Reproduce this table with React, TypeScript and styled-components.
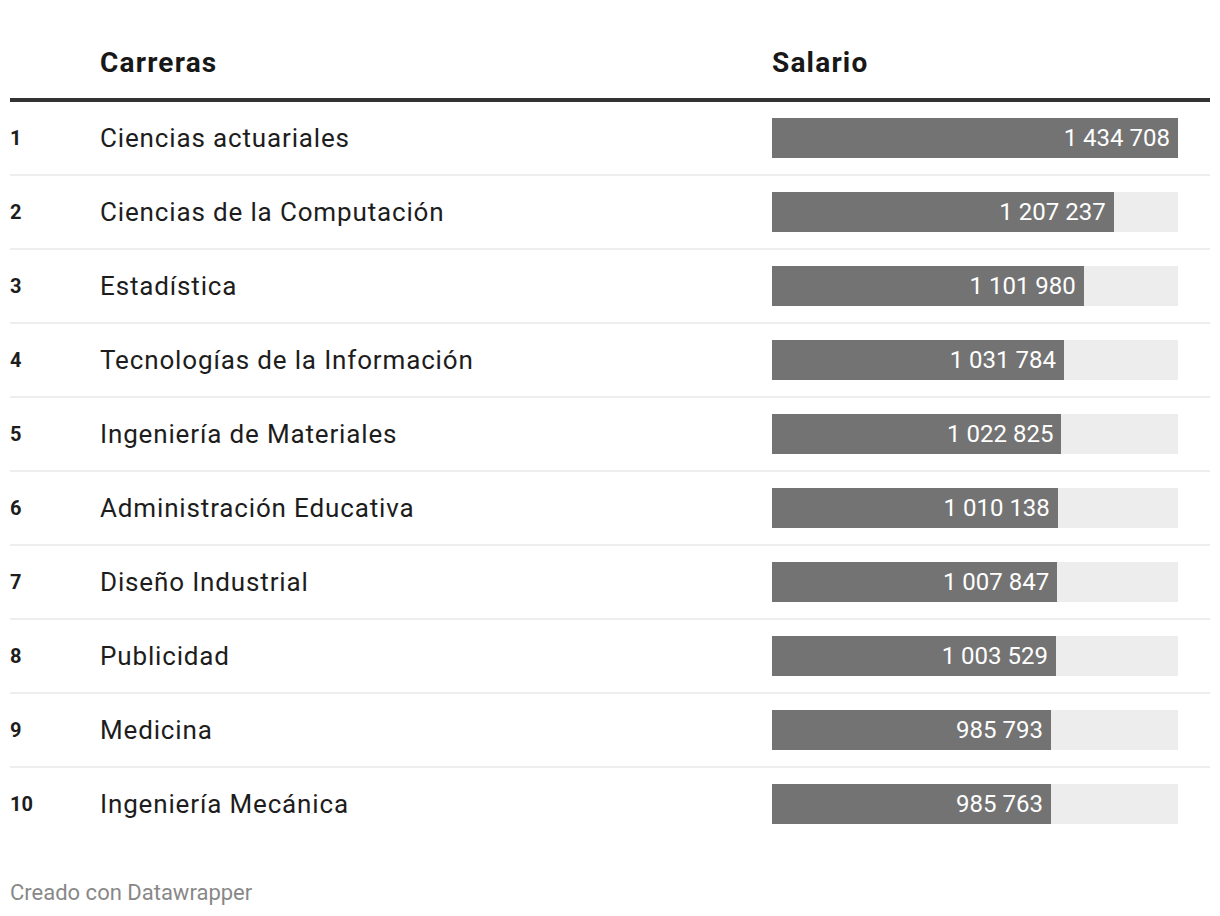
import styled, { createGlobalStyle } from 'styled-components';

const GlobalStyle = createGlobalStyle`
  body {
    margin: 0;
    background: #ffffff;
    font-family: Roboto, "Liberation Sans", sans-serif;
    color: #1d1d1d;
  }
`

const Page = styled.div`
  width: 1200px;
  padding: 0 10px;
`

const Table = styled.div`
  display: flex;
  flex-direction: column;
`

const Row = styled.div<{ $head?: boolean }>`
  display: grid;
  grid-template-columns: 90px 1fr 438px;
  align-items: center;
  padding: ${p => (p.$head ? '47px 0 19px' : '16px 0')};
  border-bottom: ${p => (p.$head ? '4px solid #333333' : '2px solid #eeeeee')};

  &:last-child {
    border-bottom: none;
  }
`

const HeadCell = styled.div`
  font-size: 28px;
  font-weight: 700;
  line-height: 32px;
  letter-spacing: 1.2px;
  color: #181818;
`

const Rank = styled.div`
  font-size: 20px;
  font-weight: 700;
  color: #1d1d1d;
`

const Name = styled.div`
  font-size: 26px;
  line-height: 40px;
  letter-spacing: 0.85px;
  color: #1d1d1d;
`

const Track = styled.div`
  width: 406px;
  height: 40px;
  background: #ededed;
  display: flex;
`

const Bar = styled.div`
  height: 100%;
  background: #737373;
  color: #ffffff;
  font-size: 24px;
  line-height: 40px;
  text-align: right;
  padding-right: 8px;
  box-sizing: border-box;
  white-space: nowrap;
`

const Footer = styled.div`
  margin-top: 40px;
  font-size: 22px;
  color: #888888;
`

const rows = [
  { name: 'Ciencias actuariales', value: 1434708 },
  { name: 'Ciencias de la Computación', value: 1207237 },
  { name: 'Estadística', value: 1101980 },
  { name: 'Tecnologías de la Información', value: 1031784 },
  { name: 'Ingeniería de Materiales', value: 1022825 },
  { name: 'Administración Educativa', value: 1010138 },
  { name: 'Diseño Industrial', value: 1007847 },
  { name: 'Publicidad', value: 1003529 },
  { name: 'Medicina', value: 985793 },
  { name: 'Ingeniería Mecánica', value: 985763 },
];

const max = 1434708;

const format = (n: number) => n.toString().replace(/\B(?=(\d{3})+(?!\d))/g, ' ');

const App = () => {
  return (
    <Page>
      <GlobalStyle />
      <Table>
        <Row $head>
          <div />
          <HeadCell>Carreras</HeadCell>
          <HeadCell>Salario</HeadCell>
        </Row>
        {rows.map((r, i) => (
          <Row key={r.name}>
            <Rank>{i + 1}</Rank>
            <Name>{r.name}</Name>
            <Track>
              <Bar style={{ width: `${(r.value / max) * 100}%` }}>{format(r.value)}</Bar>
            </Track>
          </Row>
        ))}
      </Table>
      <Footer>Creado con Datawrapper</Footer>
    </Page>
  );
};

export default App;
